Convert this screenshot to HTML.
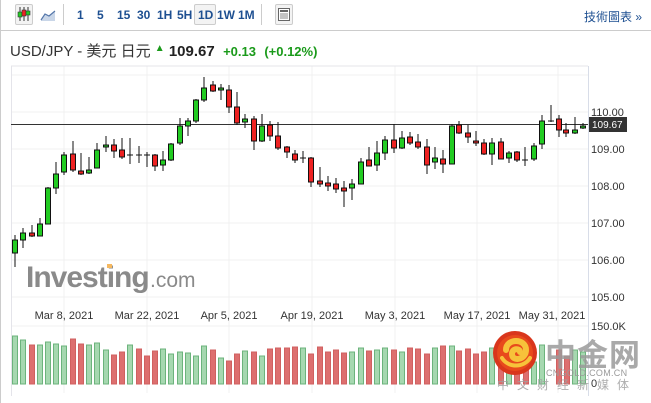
<!DOCTYPE html>
<html><head><meta charset="utf-8"><style>
html,body{margin:0;padding:0;background:#fff;width:651px;height:403px;overflow:hidden;font-family:"Liberation Sans","Noto Sans CJK TC",sans-serif}
.tb{position:absolute;left:0;top:0;width:651px;height:30px;border-bottom:1px solid #ccc}
.tb span{position:absolute;top:8px;font-size:12px;font-weight:bold;color:#1d4f91}
.btn{position:absolute;top:4px;width:16px;height:19px;border:1px solid #ccc;background:#f3f3f3;border-radius:2px}
.sep{position:absolute;top:4px;width:1px;height:21px;background:#ccc}
</style></head><body>
<div style="position:absolute;left:0;top:0;width:1px;height:403px;background:#ccc"></div>
<div class="tb">
<div class="btn" style="left:15px"></div>
<svg style="position:absolute;left:17px;top:6px" width="14" height="16"><line x1="3" y1="1" x2="3" y2="15" stroke="#333"/><rect x="1" y="6" width="4" height="5" fill="#2c2" stroke="#333" stroke-width=".6"/><line x1="7" y1="1" x2="7" y2="15" stroke="#333"/><rect x="5" y="4" width="4" height="6" fill="#e22" stroke="#333" stroke-width=".6"/><line x1="11" y1="1" x2="11" y2="15" stroke="#333"/><rect x="9" y="5" width="4" height="4" fill="#2c2" stroke="#333" stroke-width=".6"/></svg>
<svg style="position:absolute;left:40px;top:8px" width="16" height="14"><path d="M1 12 L5 6 L9 8 L15 3 L15 13 L1 13Z" fill="#c9d6e8"/><path d="M1 12 L5 6 L9 8 L15 3" fill="none" stroke="#5577aa" stroke-width="1.2"/></svg>
<div class="sep" style="left:63px"></div>
<span style="left:77px">1</span><span style="left:97px">5</span><span style="left:117px">15</span><span style="left:137px">30</span><span style="left:157px">1H</span><span style="left:177px">5H</span>
<div class="btn" style="left:194px;width:20px"></div><span style="left:198px">1D</span><span style="left:217px">1W</span><span style="left:238px">1M</span>
<div class="sep" style="left:261px"></div>
<div class="btn" style="left:275px;width:16px"></div>
<svg style="position:absolute;left:278px;top:8px" width="12" height="13"><rect x="0.5" y="0.5" width="11" height="12" fill="#fff" stroke="#666"/><rect x="2" y="2" width="8" height="2" fill="#666"/><line x1="2" y1="6" x2="10" y2="6" stroke="#888"/><line x1="2" y1="8" x2="10" y2="8" stroke="#888"/><line x1="2" y1="10" x2="10" y2="10" stroke="#888"/></svg>
<span style="left:584px;font-weight:normal;color:#1d4f91;font-size:12px">技術圖表 »</span>
</div>
<div style="position:absolute;left:10px;top:40px;font-size:15px;color:#333;white-space:nowrap">USD/JPY - 美元 日元 <span style="color:#1a9a1a;font-size:10px;vertical-align:5px">&#9650;</span> <b style="color:#222;font-size:15px">109.67</b> &nbsp;<b style="color:#1a9a1a;font-size:13px">+0.13</b> &nbsp;<b style="color:#1a9a1a;font-size:13px">(+0.12%)</b></div>
<svg style="position:absolute;left:0;top:0" width="651" height="403">
<g stroke="#f1f1f1" stroke-width="1">
<line x1="11" y1="112" x2="588" y2="112"/><line x1="11" y1="149" x2="588" y2="149"/><line x1="11" y1="186" x2="588" y2="186"/><line x1="11" y1="223" x2="588" y2="223"/><line x1="11" y1="260" x2="588" y2="260"/><line x1="11" y1="297" x2="588" y2="297"/><line x1="11" y1="75" x2="588" y2="75"/>
<line x1="64" y1="66" x2="64" y2="393"/><line x1="147" y1="66" x2="147" y2="393"/><line x1="229" y1="66" x2="229" y2="393"/><line x1="312" y1="66" x2="312" y2="393"/><line x1="395" y1="66" x2="395" y2="393"/><line x1="477" y1="66" x2="477" y2="393"/><line x1="558" y1="66" x2="558" y2="393"/>
<line x1="11" y1="326" x2="588" y2="326"/>
</g>
<line x1="11" y1="66" x2="588" y2="66" stroke="#e4e4ea"/>
<line x1="11.5" y1="66" x2="11.5" y2="396" stroke="#e4e4ea"/>
<line x1="588.5" y1="66" x2="588.5" y2="396" stroke="#d8dde8"/>
<g font-size="11" fill="#333">
<text x="591" y="116">110.00</text><text x="591" y="153">109.00</text><text x="591" y="190">108.00</text><text x="591" y="227">107.00</text><text x="591" y="264">106.00</text><text x="591" y="301">105.00</text><text x="591" y="330">150.0K</text><text x="591" y="387">0</text>
<text x="64" y="319" text-anchor="middle">Mar 8, 2021</text><text x="147" y="319" text-anchor="middle">Mar 22, 2021</text><text x="229" y="319" text-anchor="middle">Apr 5, 2021</text><text x="312" y="319" text-anchor="middle">Apr 19, 2021</text><text x="395" y="319" text-anchor="middle">May 3, 2021</text><text x="477" y="319" text-anchor="middle">May 17, 2021</text><text x="552" y="319" text-anchor="middle">May 31, 2021</text>
</g>
<text x="26" y="287" font-size="30" font-weight="bold" fill="#8a8a8a" letter-spacing="-1">Investing</text><text x="150" y="287" font-size="21" fill="#8a8a8a">.com</text>
<rect x="107" y="264" width="5" height="4" fill="#f5b860"/>
<line x1="11" y1="124.5" x2="588" y2="124.5" stroke="#333"/>
<rect x="589" y="117" width="38" height="15" fill="#333"/><text x="592" y="128" font-size="10" fill="#fff">109.67</text>
<g stroke="#111" stroke-width="1">
<line x1="15" y1="235" x2="15" y2="267"/><rect x="12.5" y="240" width="5" height="13" fill="#2c2"/>
<line x1="23" y1="228" x2="23" y2="248"/><rect x="20.5" y="233" width="5" height="7" fill="#2c2"/>
<line x1="32" y1="225" x2="32" y2="237"/><rect x="29.5" y="233" width="5" height="3" fill="#e22"/>
<line x1="40" y1="218" x2="40" y2="236"/><rect x="37.5" y="224" width="5" height="12" fill="#2c2"/>
<line x1="48" y1="187" x2="48" y2="224"/><rect x="45.5" y="188" width="5" height="36" fill="#2c2"/>
<line x1="56" y1="162" x2="56" y2="194"/><rect x="53.5" y="174" width="5" height="14" fill="#2c2"/>
<line x1="64" y1="152" x2="64" y2="175"/><rect x="61.5" y="155" width="5" height="17" fill="#2c2"/>
<line x1="73" y1="141" x2="73" y2="172"/><rect x="70.5" y="154" width="5" height="16" fill="#e22"/>
<line x1="81" y1="153" x2="81" y2="175"/><rect x="78.5" y="171" width="5" height="3" fill="#e22"/>
<line x1="89" y1="157" x2="89" y2="174"/><rect x="86.5" y="170" width="5" height="3" fill="#2c2"/>
<line x1="97" y1="143" x2="97" y2="168"/><rect x="94.5" y="150" width="5" height="18" fill="#2c2"/>
<line x1="106" y1="136" x2="106" y2="152"/><rect x="103.5" y="145" width="5" height="2" fill="#2c2"/>
<line x1="114" y1="139" x2="114" y2="158"/><rect x="111.5" y="145" width="5" height="6" fill="#e22"/>
<line x1="122" y1="138" x2="122" y2="159"/><rect x="119.5" y="150" width="5" height="7" fill="#e22"/>
<line x1="130" y1="138" x2="130" y2="164"/><line x1="127" y1="155" x2="133" y2="155"/>
<line x1="139" y1="146" x2="139" y2="163"/><line x1="136" y1="155" x2="142" y2="155"/>
<line x1="147" y1="152" x2="147" y2="167"/><line x1="144" y1="155" x2="150" y2="155"/>
<line x1="155" y1="154" x2="155" y2="171"/><rect x="152.5" y="155" width="5" height="11" fill="#e22"/>
<line x1="163" y1="151" x2="163" y2="171"/><rect x="160.5" y="160" width="5" height="5" fill="#2c2"/>
<line x1="171" y1="143" x2="171" y2="161"/><rect x="168.5" y="144" width="5" height="16" fill="#2c2"/>
<line x1="180" y1="118" x2="180" y2="145"/><rect x="177.5" y="126" width="5" height="17" fill="#2c2"/>
<line x1="188" y1="118" x2="188" y2="136"/><rect x="185.5" y="121" width="5" height="5" fill="#2c2"/>
<line x1="196" y1="99" x2="196" y2="123"/><rect x="193.5" y="100" width="5" height="21" fill="#2c2"/>
<line x1="204" y1="77" x2="204" y2="102"/><rect x="201.5" y="88" width="5" height="12" fill="#2c2"/>
<line x1="213" y1="81" x2="213" y2="92"/><rect x="210.5" y="85" width="5" height="6" fill="#e22"/>
<line x1="221" y1="84" x2="221" y2="100"/><rect x="218.5" y="88" width="5" height="2" fill="#2c2"/>
<line x1="229" y1="85" x2="229" y2="113"/><rect x="226.5" y="90" width="5" height="17" fill="#e22"/>
<line x1="237" y1="92" x2="237" y2="125"/><rect x="234.5" y="107" width="5" height="16" fill="#e22"/>
<line x1="245" y1="114" x2="245" y2="128"/><rect x="242.5" y="119" width="5" height="3" fill="#2c2"/>
<line x1="254" y1="116" x2="254" y2="150"/><rect x="251.5" y="119" width="5" height="22" fill="#e22"/>
<line x1="262" y1="114" x2="262" y2="142"/><rect x="259.5" y="126" width="5" height="15" fill="#2c2"/>
<line x1="270" y1="121" x2="270" y2="141"/><rect x="267.5" y="125" width="5" height="11" fill="#e22"/>
<line x1="278" y1="122" x2="278" y2="150"/><rect x="275.5" y="136" width="5" height="12" fill="#e22"/>
<line x1="287" y1="146" x2="287" y2="158"/><rect x="284.5" y="147" width="5" height="5" fill="#e22"/>
<line x1="295" y1="150" x2="295" y2="163"/><rect x="292.5" y="154" width="5" height="6" fill="#e22"/>
<line x1="303" y1="151" x2="303" y2="163"/><line x1="300" y1="158" x2="306" y2="158"/>
<line x1="311" y1="157" x2="311" y2="187"/><rect x="308.5" y="158" width="5" height="24" fill="#e22"/>
<line x1="320" y1="167" x2="320" y2="187"/><rect x="317.5" y="181" width="5" height="3" fill="#e22"/>
<line x1="328" y1="176" x2="328" y2="191"/><rect x="325.5" y="183" width="5" height="3" fill="#e22"/>
<line x1="336" y1="178" x2="336" y2="193"/><rect x="333.5" y="184" width="5" height="5" fill="#e22"/>
<line x1="344" y1="181" x2="344" y2="207"/><rect x="341.5" y="188" width="5" height="3" fill="#e22"/>
<line x1="352" y1="179" x2="352" y2="200"/><rect x="349.5" y="184" width="5" height="4" fill="#2c2"/>
<line x1="361" y1="158" x2="361" y2="184"/><rect x="358.5" y="162" width="5" height="22" fill="#2c2"/>
<line x1="369" y1="147" x2="369" y2="166"/><rect x="366.5" y="160" width="5" height="6" fill="#e22"/>
<line x1="377" y1="141" x2="377" y2="171"/><rect x="374.5" y="153" width="5" height="12" fill="#2c2"/>
<line x1="385" y1="136" x2="385" y2="160"/><rect x="382.5" y="140" width="5" height="13" fill="#2c2"/>
<line x1="394" y1="124" x2="394" y2="153"/><rect x="391.5" y="140" width="5" height="8" fill="#e22"/>
<line x1="402" y1="131" x2="402" y2="149"/><rect x="399.5" y="138" width="5" height="10" fill="#2c2"/>
<line x1="410" y1="132" x2="410" y2="145"/><rect x="407.5" y="137" width="5" height="6" fill="#e22"/>
<line x1="418" y1="134" x2="418" y2="149"/><rect x="415.5" y="142" width="5" height="5" fill="#e22"/>
<line x1="427" y1="139" x2="427" y2="174"/><rect x="424.5" y="147" width="5" height="18" fill="#e22"/>
<line x1="435" y1="147" x2="435" y2="169"/><rect x="432.5" y="158" width="5" height="4" fill="#2c2"/>
<line x1="443" y1="150" x2="443" y2="173"/><rect x="440.5" y="159" width="5" height="5" fill="#e22"/>
<line x1="452" y1="124" x2="452" y2="164"/><rect x="449.5" y="126" width="5" height="38" fill="#2c2"/>
<line x1="459" y1="121" x2="459" y2="134"/><rect x="456.5" y="125" width="5" height="8" fill="#e22"/>
<line x1="468" y1="125" x2="468" y2="143"/><rect x="465.5" y="133" width="5" height="4" fill="#e22"/>
<line x1="476" y1="131" x2="476" y2="146"/><rect x="473.5" y="141" width="5" height="2" fill="#e22"/>
<line x1="484" y1="139" x2="484" y2="155"/><rect x="481.5" y="143" width="5" height="11" fill="#e22"/>
<line x1="492" y1="138" x2="492" y2="165"/><rect x="489.5" y="143" width="5" height="11" fill="#2c2"/>
<line x1="501" y1="138" x2="501" y2="159"/><rect x="498.5" y="142" width="5" height="17" fill="#e22"/>
<line x1="509" y1="151" x2="509" y2="163"/><rect x="506.5" y="153" width="5" height="5" fill="#2c2"/>
<line x1="517" y1="151" x2="517" y2="162"/><rect x="514.5" y="152" width="5" height="8" fill="#e22"/>
<line x1="525" y1="147" x2="525" y2="166"/><line x1="522" y1="160" x2="528" y2="160"/>
<line x1="534" y1="143" x2="534" y2="161"/><rect x="531.5" y="146" width="5" height="13" fill="#2c2"/>
<line x1="542" y1="115" x2="542" y2="149"/><rect x="539.5" y="121" width="5" height="23" fill="#2c2"/>
<line x1="551" y1="105" x2="551" y2="122"/><line x1="548" y1="121" x2="554" y2="121"/>
<line x1="559" y1="115" x2="559" y2="137"/><rect x="556.5" y="119" width="5" height="11" fill="#e22"/>
<line x1="566" y1="123" x2="566" y2="137"/><rect x="563.5" y="130" width="5" height="3" fill="#e22"/>
<line x1="575" y1="117" x2="575" y2="134"/><rect x="572.5" y="130" width="5" height="3" fill="#2c2"/>
<line x1="583" y1="123" x2="583" y2="129"/><rect x="580.5" y="126" width="5" height="2" fill="#2c2"/>
</g>
<g stroke-width="1">
<g fill="#a6d8b0" stroke="#6cb37c">
<rect x="12.5" y="336" width="5" height="48"/><rect x="20.5" y="340" width="5" height="44"/><rect x="37.5" y="345" width="5" height="39"/><rect x="45.5" y="342" width="5" height="42"/><rect x="53.5" y="344" width="5" height="40"/><rect x="61.5" y="346" width="5" height="38"/><rect x="86.5" y="345" width="5" height="39"/><rect x="94.5" y="343" width="5" height="41"/><rect x="103.5" y="350" width="5" height="34"/><rect x="127.5" y="345" width="5" height="39"/><rect x="160.5" y="349" width="5" height="35"/><rect x="168.5" y="354" width="5" height="30"/><rect x="177.5" y="352" width="5" height="32"/><rect x="185.5" y="353" width="5" height="31"/><rect x="193.5" y="356" width="5" height="28"/><rect x="201.5" y="346" width="5" height="38"/><rect x="218.5" y="358" width="5" height="26"/><rect x="242.5" y="351" width="5" height="33"/><rect x="259.5" y="356" width="5" height="28"/><rect x="300.5" y="348" width="5" height="36"/><rect x="349.5" y="352" width="5" height="32"/><rect x="358.5" y="348" width="5" height="36"/><rect x="374.5" y="350" width="5" height="34"/><rect x="382.5" y="348" width="5" height="36"/><rect x="399.5" y="352" width="5" height="32"/><rect x="432.5" y="348" width="5" height="36"/><rect x="449.5" y="346" width="5" height="38"/><rect x="489.5" y="348" width="5" height="36"/><rect x="506.5" y="355" width="5" height="29"/><rect x="531.5" y="362" width="5" height="22"/><rect x="539.5" y="345" width="5" height="39"/><rect x="572.5" y="350" width="5" height="34"/><rect x="580.5" y="352" width="5" height="32"/>
</g>
<g fill="#dd6f6f" stroke="#d06060">
<rect x="29.5" y="345" width="5" height="39"/><rect x="70.5" y="339" width="5" height="45"/><rect x="78.5" y="344" width="5" height="40"/><rect x="111.5" y="355" width="5" height="29"/><rect x="119.5" y="352" width="5" height="32"/><rect x="136.5" y="349" width="5" height="35"/><rect x="144.5" y="356" width="5" height="28"/><rect x="152.5" y="351" width="5" height="33"/><rect x="210.5" y="350" width="5" height="34"/><rect x="226.5" y="361" width="5" height="23"/><rect x="234.5" y="354" width="5" height="30"/><rect x="251.5" y="352" width="5" height="32"/><rect x="267.5" y="349" width="5" height="35"/><rect x="275.5" y="348" width="5" height="36"/><rect x="284.5" y="348" width="5" height="36"/><rect x="292.5" y="347" width="5" height="37"/><rect x="308.5" y="354" width="5" height="30"/><rect x="317.5" y="347" width="5" height="37"/><rect x="325.5" y="352" width="5" height="32"/><rect x="333.5" y="350" width="5" height="34"/><rect x="341.5" y="353" width="5" height="31"/><rect x="366.5" y="351" width="5" height="33"/><rect x="391.5" y="350" width="5" height="34"/><rect x="407.5" y="348" width="5" height="36"/><rect x="415.5" y="349" width="5" height="35"/><rect x="424.5" y="354" width="5" height="30"/><rect x="440.5" y="346" width="5" height="38"/><rect x="456.5" y="351" width="5" height="33"/><rect x="465.5" y="349" width="5" height="35"/><rect x="473.5" y="354" width="5" height="30"/><rect x="481.5" y="352" width="5" height="32"/><rect x="498.5" y="350" width="5" height="34"/><rect x="514.5" y="355" width="5" height="29"/><rect x="523.5" y="352" width="5" height="32"/><rect x="556.5" y="350" width="5" height="34"/><rect x="564.5" y="356" width="5" height="28"/>
</g></g>
<circle cx="515" cy="353" r="22" fill="#d9361c"/>
<circle cx="515" cy="353" r="18" fill="#e84a1c"/>
<path d="M506 350 C506 338 526 338 526 350 C526 360 512 362 512 354 C512 348 520 348 520 352" fill="none" stroke="#f7c23a" stroke-width="6" stroke-linecap="round"/>
<path d="M502 358 C508 368 524 368 530 358" fill="none" stroke="#f7c23a" stroke-width="4" stroke-linecap="round"/>
<text x="545" y="366" font-size="31" font-weight="bold" fill="#9a9a9a" fill-opacity="0.85" font-family="Noto Sans CJK SC,sans-serif" letter-spacing="1">中金网</text>
<text x="546" y="376" font-size="9" fill="#9a9a9a" letter-spacing="0.3">CNGOLD.COM.CN</text>
<text x="497" y="389" font-size="12" fill="#a0a0a0" fill-opacity="0.85" font-family="Noto Sans CJK SC,sans-serif" letter-spacing="8">中文财经新媒体</text>
</svg>
</body></html>
